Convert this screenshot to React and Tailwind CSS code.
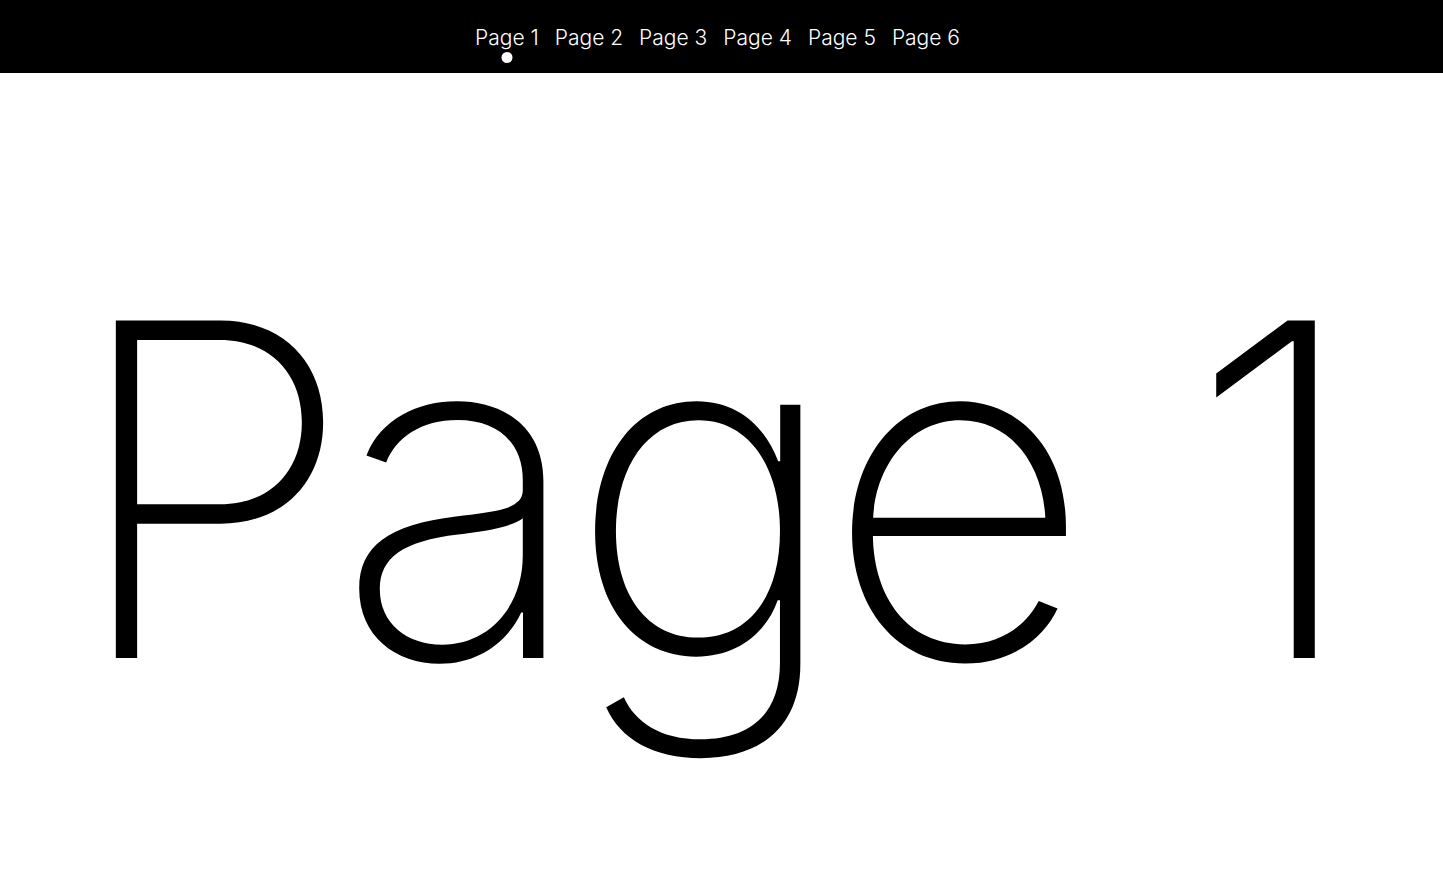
import React from "react";

export default function App() {
  const pages = ["Page 1", "Page 2", "Page 3", "Page 4", "Page 5", "Page 6"];
  return (
    <div className="w-[1443px] h-[893px] bg-white overflow-hidden flex flex-col" style={{ fontFamily: "Inter, 'Open Sans', sans-serif" }}>
      <nav className="h-[73px] bg-black flex justify-center items-start pt-[23px] shrink-0">
        <ul className="flex gap-[16px] ml-[-8px]">
          {pages.map((p, i) => (
            <li key={p} className="relative text-white text-[21px] leading-[30px] font-light">
              {p}
              {i === 0 && (
                <span className="absolute left-1/2 -translate-x-1/2 top-[29px] w-[11px] h-[11px] rounded-full bg-white" />
              )}
            </li>
          ))}
        </ul>
      </nav>
      <main className="flex-1 flex justify-center">
        <div className="text-black font-extralight text-[464px] leading-none tracking-[-0.038em] mt-[184px] mr-[30px]">Page 1</div>
      </main>
    </div>
  );
}
